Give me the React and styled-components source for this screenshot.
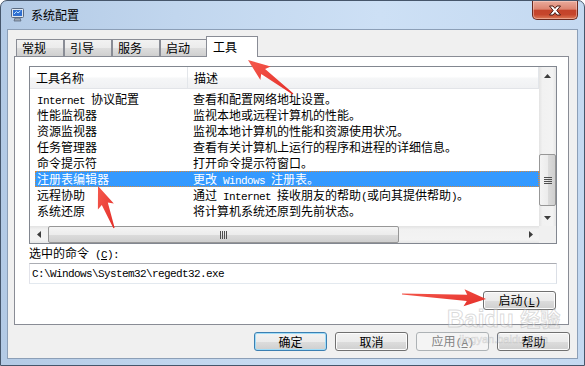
import React from 'react'
import styled, { createGlobalStyle, css } from 'styled-components'

const GlobalStyle = createGlobalStyle`
  html, body {
    margin: 0;
    padding: 0;
    background: #fff;
  }
  body {
    font-family: "Noto Sans CJK SC", "Noto Sans", sans-serif;
    font-size: 12px;
    color: #000;
  }
  * {
    box-sizing: border-box;
  }
`

const Window = styled.div`
  position: relative;
  width: 585px;
  height: 366px;
  display: flex;
  flex-direction: column;
  border: 1px solid #46566b;
  border-radius: 7px 7px 0 0;
  background: linear-gradient(90deg, #b3cae5 0%, #c1d6ee 30%, #cde0f5 65%, #c4d9f1 100%);
  overflow: hidden;
`

const TitleBar = styled.div`
  height: 28px;
  flex-shrink: 0;
  display: flex;
  align-items: center;
  padding-left: 9px;
`

const TitleText = styled.span`
  margin-left: 5px;
  font-size: 12px;
  line-height: 16px;
`

const CloseButton = styled.div`
  align-self: flex-start;
  margin-left: auto;
  margin-right: 6px;
  width: 46px;
  height: 19px;
  display: flex;
  align-items: center;
  justify-content: center;
  border: 1px solid #6a2a1f;
  border-top: none;
  border-radius: 0 0 5px 5px;
  background: linear-gradient(180deg, #e9ab9c 0%, #dc8470 45%, #c4432a 52%, #c6462c 75%, #dc7a58 100%);
  box-shadow: inset 0 0 0 1px rgba(255, 220, 210, 0.45);
`

const Client = styled.div`
  flex: 1;
  margin: 0 6px 6px;
  background: #f0f0f0;
  border: 1px solid #8c9fb7;
  display: flex;
  flex-direction: column;
  padding: 6px 7px 7px 6px;
`

const TabStrip = styled.div`
  height: 20px;
  display: flex;
  align-items: flex-end;
  padding-left: 2px;
  position: relative;
  z-index: 1;
`

const Tab = styled.div`
  width: 48px;
  height: 17px;
  padding-left: 5px;
  border: 1px solid #898c95;
  border-bottom: none;
  font-size: 12px;
  line-height: 16px;
  background: linear-gradient(180deg, #f2f2f2 0%, #ebebeb 50%, #dddddd 51%, #cfcfcf 100%);
  ${(p) =>
    p.$active &&
    css`
      width: 52px;
      height: 21px;
      margin-left: -2px;
      margin-bottom: -1px;
      padding-left: 6px;
      line-height: 20px;
      background: #fff;
    `}
`

const Panel = styled.div`
  height: 269px;
  margin-right: 1px;
  border: 1px solid #898c95;
  background: #fff;
  padding: 9px 11px 0 14px;
  display: flex;
  flex-direction: column;
`

const ListBox = styled.div`
  height: 178px;
  border: 1px solid #828790;
  display: grid;
  grid-template-columns: 1fr 17px;
  grid-template-rows: 1fr 17px;
  background: #fff;
`

const ListContent = styled.div`
  overflow: hidden;
`

const Header = styled.div`
  height: 22px;
  display: grid;
  grid-template-columns: 158px 1fr;
  background: linear-gradient(180deg, #ffffff 0%, #ffffff 45%, #f5f6f7 55%, #f0f1f3 100%);
  border-bottom: 1px solid #e2e4e8;
`

const HeaderCell = styled.div`
  padding-left: 6px;
  line-height: 21px;
  border-right: 1px solid #e3e6ea;
`

const Rows = styled.div`
  padding: 2px 0 0 5px;
`

const Row = styled.div`
  height: 16px;
  display: grid;
  grid-template-columns: 158px 1fr;
  line-height: 16px;
  white-space: nowrap;
  ${(p) =>
    p.$selected &&
    css`
      background: #3399ff;
      color: #fff;
      outline: 1px dotted #d68a3c;
      outline-offset: -1px;
    `}
`

const NameCell = styled.div`
  padding-left: 2px;
`

const Mono = styled.span`
  font-family: "Liberation Mono", "DejaVu Sans Mono", monospace;
  font-size: 11px;
  letter-spacing: -0.6px;
  white-space: pre;
`

const VScroll = styled.div`
  display: flex;
  flex-direction: column;
  background: linear-gradient(90deg, #e3e3e3 0%, #f1f1f1 20%, #f3f3f3 80%, #e6e6e6 100%);
`

const HScroll = styled.div`
  display: flex;
  background: linear-gradient(180deg, #e3e3e3 0%, #f1f1f1 20%, #f3f3f3 80%, #e6e6e6 100%);
`

const ArrowButton = styled.div`
  width: 17px;
  height: 17px;
  flex-shrink: 0;
  display: flex;
  align-items: center;
  justify-content: center;
  ${(p) =>
    p.$end &&
    css`
      margin-${p.$axis === 'x' ? 'left' : 'top'}: auto;
    `}
`

const Thumb = styled.div`
  border: 1px solid #979797;
  border-radius: 2px;
  display: flex;
  align-items: center;
  justify-content: center;
  ${(p) =>
    p.$axis === 'y'
      ? css`
          height: 52px;
          margin: 70px 0 0 0;
          background: linear-gradient(90deg, #f4f4f4 0%, #ececec 50%, #dcdcdc 51%, #cfcfcf 100%);
        `
      : css`
          width: 351px;
          margin-left: 1px;
          background: linear-gradient(180deg, #f4f4f4 0%, #ececec 50%, #dcdcdc 51%, #cfcfcf 100%);
        `}
`

const Corner = styled.div`
  background: #f0f0f0;
`

const FieldLabel = styled.div`
  margin-top: 1px;
  line-height: 16px;
  font-size: 12px;
`

const CommandInput = styled.input`
  height: 21px;
  width: 100%;
  padding: 0 2px;
  margin: 0;
  border: 1px solid;
  border-color: #abadb3 #dbdfe6 #e3e9ef #e2e3ea;
  font-family: "Liberation Mono", "DejaVu Sans Mono", monospace;
  font-size: 11px;
  letter-spacing: -0.6px;
  color: #000;
  background: #fff;
  outline: none;
`

const LaunchRow = styled.div`
  display: flex;
  justify-content: flex-end;
  margin-top: 7px;
  padding-right: 1px;
`

const ButtonRow = styled.div`
  display: flex;
  justify-content: flex-end;
  gap: 8px;
  margin-top: 7px;
`

const Button = styled.button`
  width: 73px;
  height: 19px;
  padding: 0;
  border: 1px solid #707070;
  border-radius: 3px;
  font-family: "Noto Sans CJK SC", "Noto Sans", sans-serif;
  font-size: 12px;
  line-height: 16px;
  color: #000;
  background: linear-gradient(180deg, #f2f2f2 0%, #ebebeb 50%, #dddddd 51%, #cfcfcf 100%);
  box-shadow: inset 0 0 0 1px #fcfcfc;
  ${(p) =>
    p.$default &&
    css`
      border-color: #3c7fb1;
      box-shadow: inset 0 0 0 1px #9fdcf8;
    `}
  &:disabled {
    border-color: #adb2b5;
    background: #f4f4f4;
    color: #838383;
    box-shadow: none;
  }
`

const Under = styled.span`
  text-decoration: underline;
`

const Overlay = styled.svg`
  position: absolute;
  left: -1px;
  top: -1px;
  pointer-events: none;
`

const Watermark = styled.div`
  position: absolute;
  left: 446px;
  top: 304px;
  pointer-events: none;
  color: rgba(255, 255, 255, 0.35);
  -webkit-text-stroke: 1px rgba(150, 150, 150, 0.35);
  text-align: center;
`

const WatermarkLogo = styled.div`
  font-family: "Liberation Sans", Arial, sans-serif;
  font-weight: 700;
  font-size: 24px;
  line-height: 28px;
  white-space: nowrap;
  span {
    font-family: "Noto Sans CJK SC", sans-serif;
    font-size: 20px;
  }
`

const WatermarkUrl = styled.div`
  font-family: "Liberation Sans", Arial, sans-serif;
  font-size: 11px;
  line-height: 12px;
  -webkit-text-stroke: 0.6px rgba(150, 150, 150, 0.35);
`

// split ascii runs so they get the narrow mono face like the old bitmap font
const mixed = (text) =>
  text.split(/([\x20-\x7e]+)/).map((part, i) =>
    /^[\x20-\x7e]+$/.test(part) ? <Mono key={i}>{part}</Mono> : part
  )

const tools = [
  { name: 'Internet 协议配置', desc: '查看和配置网络地址设置。' },
  { name: '性能监视器', desc: '监视本地或远程计算机的性能。' },
  { name: '资源监视器', desc: '监视本地计算机的性能和资源使用状况。' },
  { name: '任务管理器', desc: '查看有关计算机上运行的程序和进程的详细信息。' },
  { name: '命令提示符', desc: '打开命令提示符窗口。' },
  { name: '注册表编辑器', desc: '更改 Windows 注册表。', selected: true },
  { name: '远程协助', desc: '通过 Internet 接收朋友的帮助(或向其提供帮助)。' },
  { name: '系统还原', desc: '将计算机系统还原到先前状态。' },
]

const tabs = ['常规', '引导', '服务', '启动']

const arrows = [
  { tail: [293, 94], tip: [248, 60] },
  { tail: [114, 228], tip: [98, 186] },
  { tail: [402, 294], tip: [486, 299] },
]

function arrowPoints({ tail, tip }) {
  const dx = tip[0] - tail[0]
  const dy = tip[1] - tail[1]
  const len = Math.hypot(dx, dy)
  const ux = dx / len
  const uy = dy / len
  const nx = -uy
  const ny = ux
  const headLen = 22
  const headW = 17
  const bx = tip[0] - ux * headLen
  const by = tip[1] - uy * headLen
  const pt = (x, y, w) => `${(x + nx * w).toFixed(1)},${(y + ny * w).toFixed(1)}`
  return [
    pt(tail[0], tail[1], 0.6),
    pt(bx + ux * 3, by + uy * 3, 3.2),
    pt(bx, by, headW / 2),
    `${tip[0]},${tip[1]}`,
    pt(bx, by, -headW / 2),
    pt(bx + ux * 3, by + uy * 3, -3.2),
    pt(tail[0], tail[1], -0.6),
  ].join(' ')
}

const AppIcon = () => (
  <svg width="16" height="16" viewBox="0 0 16 16">
    <rect x="1.5" y="1.5" width="12" height="9" rx="1" fill="#dfe6ee" stroke="#5a6a80" />
    <rect x="3" y="3" width="9" height="6" fill="#2f6fd0" />
    <path d="M4 7 L6.5 4.5 L8 6 L10.5 3.8" stroke="#bfe3ff" strokeWidth="1" fill="none" />
    <path d="M5 11 L4 14 H11 L10 11 Z" fill="#9aa6b4" stroke="#5a6a80" strokeWidth="0.8" />
  </svg>
)

const CloseGlyph = () => (
  <svg width="14" height="11" viewBox="0 0 14 11">
    <path
      d="M1.5 1 H5 L7 3.4 L9 1 H12.5 L8.8 5.5 L12.5 10 H9 L7 7.6 L5 10 H1.5 L5.2 5.5 Z"
      fill="#fff"
      stroke="#4a1a12"
      strokeWidth="1"
      strokeLinejoin="round"
    />
  </svg>
)

const Tri = ({ dir }) => {
  const pts = {
    up: '0,4 3.5,0 7,4',
    down: '0,0 7,0 3.5,4',
    left: '4,0 4,7 0,3.5',
    right: '0,0 0,7 4,3.5',
  }[dir]
  const vertical = dir === 'up' || dir === 'down'
  return (
    <svg width={vertical ? 7 : 4} height={vertical ? 4 : 7}>
      <polygon points={pts} fill="#3c3c3c" />
    </svg>
  )
}

const Grip = ({ axis }) =>
  axis === 'y' ? (
    <svg width="8" height="7">
      {[0, 2, 4, 6].map((y) => (
        <line key={y} x1="0" x2="8" y1={y + 0.5} y2={y + 0.5} stroke="#4f4f4f" />
      ))}
    </svg>
  ) : (
    <svg width="7" height="8">
      {[0, 2, 4, 6].map((x) => (
        <line key={x} y1="0" y2="8" x1={x + 0.5} x2={x + 0.5} stroke="#4f4f4f" />
      ))}
    </svg>
  )

export default function App() {
  return (
    <>
      <GlobalStyle />
      <Window>
        <TitleBar>
          <AppIcon />
          <TitleText>系统配置</TitleText>
          <CloseButton>
            <CloseGlyph />
          </CloseButton>
        </TitleBar>
        <Client>
          <TabStrip>
            {tabs.map((t) => (
              <Tab key={t}>{t}</Tab>
            ))}
            <Tab $active>工具</Tab>
          </TabStrip>
          <Panel>
            <ListBox>
              <ListContent>
                <Header>
                  <HeaderCell>工具名称</HeaderCell>
                  <HeaderCell>描述</HeaderCell>
                </Header>
                <Rows>
                  {tools.map((t) => (
                    <Row key={t.name} $selected={t.selected}>
                      <NameCell>{mixed(t.name)}</NameCell>
                      <div>{mixed(t.desc)}</div>
                    </Row>
                  ))}
                </Rows>
              </ListContent>
              <VScroll>
                <ArrowButton>
                  <Tri dir="up" />
                </ArrowButton>
                <Thumb $axis="y">
                  <Grip axis="y" />
                </Thumb>
                <ArrowButton $end $axis="y">
                  <Tri dir="down" />
                </ArrowButton>
              </VScroll>
              <HScroll>
                <ArrowButton>
                  <Tri dir="left" />
                </ArrowButton>
                <Thumb $axis="x">
                  <Grip axis="x" />
                </Thumb>
                <ArrowButton $end $axis="x">
                  <Tri dir="right" />
                </ArrowButton>
              </HScroll>
              <Corner />
            </ListBox>
            <FieldLabel>
              选中的命令<Mono> (<Under>C</Under>):</Mono>
            </FieldLabel>
            <CommandInput readOnly value="C:\Windows\System32\regedt32.exe" />
            <LaunchRow>
              <Button>
                启动<Mono>(<Under>L</Under>)</Mono>
              </Button>
            </LaunchRow>
          </Panel>
          <ButtonRow>
            <Button $default>确定</Button>
            <Button>取消</Button>
            <Button disabled>
              应用<Mono>(<Under>A</Under>)</Mono>
            </Button>
            <Button>帮助</Button>
          </ButtonRow>
        </Client>
        <Watermark>
          <WatermarkLogo>
            Baidu <span>经验</span>
          </WatermarkLogo>
          <WatermarkUrl>jingyan.baidu.com</WatermarkUrl>
        </Watermark>
        <Overlay width="585" height="366">
          <defs>
            <linearGradient id="arrowRed" x1="0" y1="0" x2="1" y2="1">
              <stop offset="0" stopColor="#f55a4e" />
              <stop offset="1" stopColor="#e42e28" />
            </linearGradient>
          </defs>
          {arrows.map((a, i) => (
            <polygon key={i} points={arrowPoints(a)} fill="url(#arrowRed)" />
          ))}
        </Overlay>
      </Window>
    </>
  )
}
